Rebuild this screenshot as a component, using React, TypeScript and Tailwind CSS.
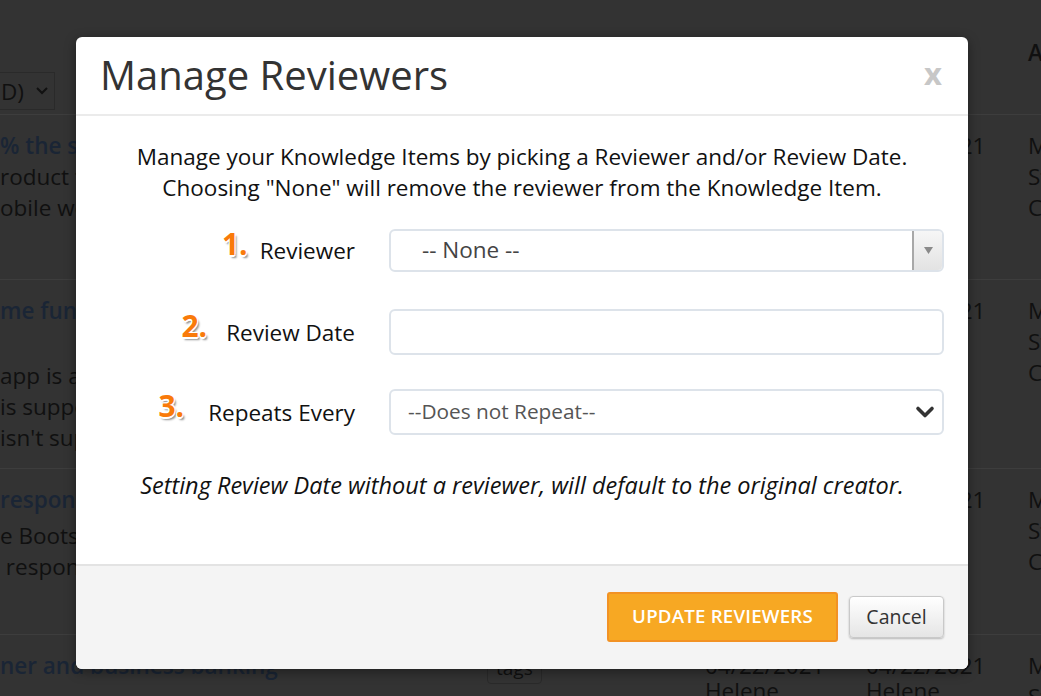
import React from "react";

const font = "font-['Open_Sans','Liberation_Sans',sans-serif]";

function Num({ n, gap }: { n: string; gap: string }) {
  return (
    <span className={`text-[30px] leading-none font-bold text-[#f97a0a] [text-shadow:1px_1px_0_#fff,-1px_-1px_0_#fff,1px_-1px_0_#fff,-1px_1px_0_#fff,0_2px_0_#fff,2px_3px_2px_#8f8f8f] -translate-y-[6px] inline-block ${gap}`}>
      {n}
    </span>
  );
}

function Label({ n, text, gap }: { n: string; text: string; gap: string }) {
  return (
    <div className="w-[255px] flex items-center justify-end text-[22.5px] text-[#111]">
      <Num n={n} gap={gap} />
      <span className="translate-y-[1px]">{text}</span>
    </div>
  );
}

const cols = "grid grid-cols-[487px_218px_161px_162px_1fr]";

export default function App() {
  return (
    <div className={`relative w-[1041px] h-[696px] overflow-hidden bg-[#333333] ${font}`}>
      {/* background page (dimmed) */}
      <div className="flex flex-col text-[22.5px] leading-[31px] text-[#101010]">
        <div className={`h-[115px] border-b border-[#3d3d3d] ${cols}`}>
          <div className="pt-[72px]">
            <div className="-ml-[12px] w-[67px] h-[38px] border border-[#2a2a2a] flex items-center pl-[12px] gap-[12px]">
              <span>D)</span>
              <svg width="12" height="8" viewBox="0 0 12 8"><path d="M1 1l5 5 5-5" stroke="#111" strokeWidth="2" fill="none" /></svg>
            </div>
          </div>
          <div />
          <div />
          <div />
          <div className="pt-[37px] font-semibold">Author</div>
        </div>
        <div className={`h-[165px] border-b border-[#3d3d3d] ${cols} pt-[15px] whitespace-nowrap`}>
          <div className="overflow-hidden">
            <div className="font-semibold text-[#1a2535]">% the same on mobile</div>
            <div>roduct team for the</div>
            <div>obile website version</div>
          </div>
          <div />
          <div>04/22/2021</div>
          <div>04/22/2021</div>
          <div>
            <div>Mark</div>
            <div>Stevens</div>
            <div>Content</div>
          </div>
        </div>
        <div className={`h-[189px] border-b border-[#3d3d3d] ${cols} pt-[15px] whitespace-nowrap`}>
          <div className="overflow-hidden">
            <div className="font-semibold text-[#1a2535]">me functionality</div>
            <div className="mt-[34px]">app is also available</div>
            <div>is supported on all</div>
            <div>isn't supported yet</div>
          </div>
          <div />
          <div>04/22/2021</div>
          <div>04/22/2021</div>
          <div>
            <div>Mark</div>
            <div>Stevens</div>
            <div>Content</div>
          </div>
        </div>
        <div className={`h-[166px] border-b border-[#3d3d3d] ${cols} pt-[15px] whitespace-nowrap`}>
          <div className="overflow-hidden">
            <div className="font-semibold text-[#1a2535]">responsive design</div>
            <div className="mt-[5px]">e Bootstrap grid</div>
            <div>&nbsp;responsive layout</div>
          </div>
          <div />
          <div>04/22/2021</div>
          <div>04/22/2021</div>
          <div>
            <div>Mark</div>
            <div>Stevens</div>
            <div>Content</div>
          </div>
        </div>
        <div className={`h-[80px] ${cols} pt-[15px] whitespace-nowrap`}>
          <div className="overflow-hidden">
            <div className="font-semibold text-[#1a2535]">ner and business banking</div>
          </div>
          <div>
            <span className="inline-block mt-[2px] px-[8px] leading-[30px] text-[19px] border border-[#2a2a2a] rounded-[4px]">tags</span>
          </div>
          <div>
            <div>04/22/2021</div>
            <div className="-mt-[6px]">Helene</div>
          </div>
          <div>
            <div>04/22/2021</div>
            <div className="-mt-[6px]">Helene</div>
          </div>
          <div>
            <div>Mark</div>
            <div>Stevens</div>
          </div>
        </div>
      </div>

      {/* modal */}
      <div className="absolute left-[76px] top-[37px] w-[892px] h-[632px] bg-white rounded-[6px] overflow-hidden flex flex-col shadow-[0_3px_12px_rgba(0,0,0,0.4)]">
        <div className="h-[79px] shrink-0 flex items-center justify-between pl-[24px] pr-[26px] border-b-2 border-[#ebebeb]">
          <h1 className="text-[40px] leading-none text-[#333] -mt-[2px]">Manage Reviewers</h1>
          <span className="text-[31px] leading-none font-bold text-[#c7c7c7] -mt-[4px]">x</span>
        </div>
        <div className="h-[448px] shrink-0 px-[24px] pt-[25px] text-[#111]">
          <p className="text-center text-[22.5px] leading-[31px]">
            Manage your Knowledge Items by picking a Reviewer and/or Review Date.
            <br />
            Choosing "None" will remove the reviewer from the Knowledge Item.
          </p>
          <div className="mt-[24px] h-[46px] flex items-center">
            <Label n="1." text="Reviewer" gap="mr-[12px]" />
            <div className="ml-[34px] flex-1 h-[43px] border-2 border-[#dde3ea] rounded-[6px] flex items-stretch overflow-hidden">
              <div className="flex-1 flex items-center pl-[31px] text-[22.5px] text-[#444]">-- None --</div>
              <div className="w-[30px] border-l-2 border-[#a8a8a8] bg-gradient-to-b from-[#f6f6f6] to-[#e3e3e3] flex items-center justify-center">
                <svg width="9" height="7" viewBox="0 0 9 7"><path d="M0 0h9L4.5 7z" fill="#8a8a8a" /></svg>
              </div>
            </div>
          </div>
          <div className="mt-[36px] h-[46px] flex items-center">
            <Label n="2." text="Review Date" gap="mr-[19px]" />
            <div className="ml-[34px] flex-1 h-[46px] border-2 border-[#dde3ea] rounded-[6px] bg-white" />
          </div>
          <div className="mt-[34px] h-[46px] flex items-center">
            <Label n="3." text="Repeats Every" gap="mr-[24px]" />
            <div className="ml-[34px] flex-1 h-[46px] border-2 border-[#dde3ea] rounded-[6px] flex items-center justify-between pl-[17px] pr-[7px]">
              <span className="text-[20.8px] text-[#555]">--Does not Repeat--</span>
              <svg width="20" height="14" viewBox="0 0 20 14"><path d="M3 3.5l7 7 7-7" stroke="#333" strokeWidth="3.6" fill="none" strokeLinecap="round" strokeLinejoin="round" /></svg>
            </div>
          </div>
          <p className="mt-[35px] text-center italic text-[23.5px] leading-[31px]">
            Setting Review Date without a reviewer, will default to the original creator.
          </p>
        </div>
        <div className="flex-1 border-t-2 border-[#e3e3e3] bg-[#f4f4f4] flex items-center justify-end gap-[11px] pr-[24px] pb-[2px]">
          <button className="w-[231px] h-[50px] bg-[#f7a823] border-2 border-[#f29224] rounded-[3px] text-white text-[18.7px] font-semibold tracking-[0.2px]">
            UPDATE REVIEWERS
          </button>
          <button className="w-[95px] h-[42px] bg-gradient-to-b from-white to-[#e5e5e5] border border-[#c9c9c9] rounded-[4px] text-[19.5px] text-[#333] shadow-[0_1px_2px_rgba(0,0,0,0.25)]">
            Cancel
          </button>
        </div>
      </div>
    </div>
  );
}
